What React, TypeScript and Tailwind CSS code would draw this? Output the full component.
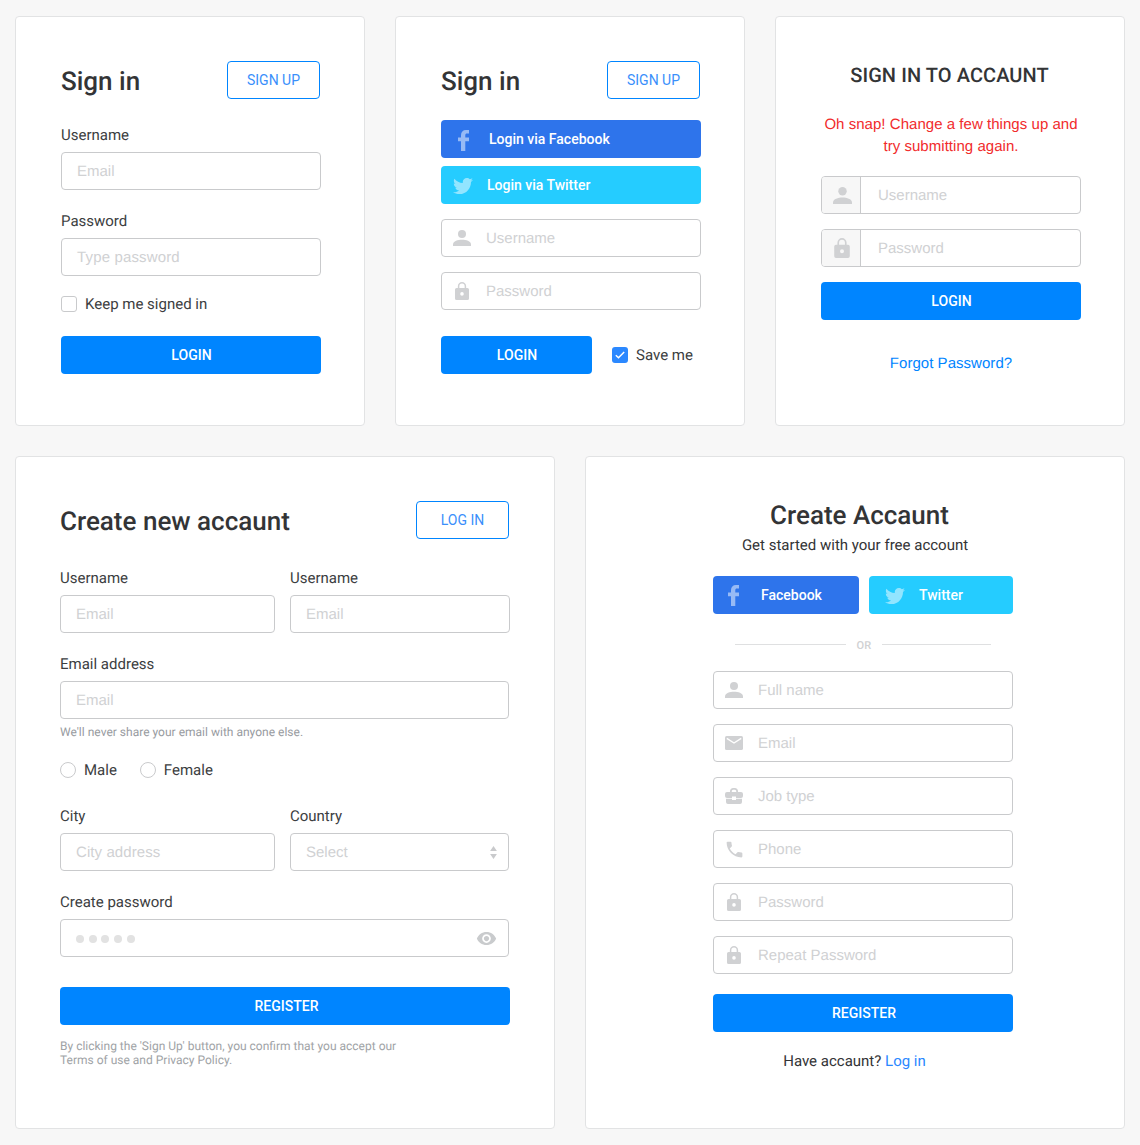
import React from "react";
import { MdPhone, MdVisibility } from "react-icons/md";
import { FaTwitter } from "react-icons/fa";

type Kids = { children?: React.ReactNode; className?: string };

const PersonIcon = ({ w = 18, h = 16 }) => (
  <svg width={w} height={h} viewBox="0 0 18 16" fill="currentColor">
    <circle cx="9" cy="4" r="4" />
    <path d="M0 16v-1.600C0 11.200 5 9.800 9 9.800s9 1.400 9 4.600V16z" />
  </svg>
);

const LockIcon = ({ w = 14, h = 18 }) => (
  <svg width={w} height={h} viewBox="0 0 14 18" fill="none">
    <path d="M3.600 7V4.200a3.400 3.400 0 0 1 6.800 0V7" stroke="currentColor" strokeWidth="1.500" />
    <path
      fill="currentColor"
      fillRule="evenodd"
      d="M1.600 6h10.800A1.600 1.600 0 0 1 14 7.600v8.800A1.600 1.600 0 0 1 12.400 18H1.600A1.600 1.600 0 0 1 0 16.400V7.600A1.600 1.600 0 0 1 1.600 6zM7 10.100a1.800 1.800 0 1 0 0 3.600 1.800 1.800 0 0 0 0-3.600z"
    />
  </svg>
);

const MailIcon = () => (
  <svg width="18" height="14" viewBox="0 0 18 14" fill="none">
    <rect width="18" height="14" rx="1.6" fill="currentColor" />
    <path d="M1.800 2.400 9 7l7.200-4.600" stroke="#fff" strokeWidth="1.400" />
  </svg>
);

const CaseIcon = () => (
  <svg width="18" height="16" viewBox="0 0 18 16" fill="none">
    <path d="M5.900 4.500V3.200a2.200 2.200 0 0 1 2.200-2.300h1.800a2.200 2.200 0 0 1 2.200 2.300v1.300" stroke="currentColor" strokeWidth="1.800" />
    <path
      fill="currentColor"
      d="M2 4h14a2 2 0 0 1 2 2v2a2 2 0 0 1-2 2h-5V8.600H7V10H2a2 2 0 0 1-2-2V6a2 2 0 0 1 2-2zM1 10.700h6v1.300h4v-1.300h6V14a2 2 0 0 1-2 2H3a2 2 0 0 1-2-2z"
    />
  </svg>
);

const FacebookIcon = ({ className = "" }) => (
  <svg width="11" height="21" viewBox="0 0 11 21" className={className} fill="currentColor">
    <path d="M11 0v3.600H8.900C7.800 3.600 7.300 4.200 7.300 5.200V7.400H11v3.800H7.300V21H3v-9.800H0V7.400h3V5c0-3 1.900-5 5-5z" />
  </svg>
);

const Card = ({ children, className = "" }: Kids) => (
  <section className={`rounded border border-[#e2e3e4] bg-white pt-[44px] ${className}`}>{children}</section>
);

const Title = ({ children, className = "" }: Kids) => (
  <h2 className={`h-[38px] text-[26px] leading-[40px] font-medium text-[#333436] ${className}`}>{children}</h2>
);

const OutlineButton = ({ children }: Kids) => (
  <button className="h-[38px] w-[93px] rounded border border-[#0085ff] text-sm leading-9 text-[#3a8ffb]">
    {children}
  </button>
);

const Solid = ({ children, className = "" }: Kids) => (
  <button
    className={`block h-[38px] rounded bg-[#0085ff] text-sm leading-[38px] font-medium tracking-[0.03px] text-white ${className}`}
  >
    {children}
  </button>
);

const Label = ({ children, className = "" }: Kids) => (
  <div className={`h-5 text-[15px] leading-5 text-[#3c3e41] ${className}`}>{children}</div>
);

const hint = "font-['Liberation_Sans',sans-serif] text-[15px] leading-[38px] text-[#d0d1d3]";

const Input = ({ children, className = "" }: Kids) => (
  <div className={`flex h-[38px] items-center rounded border border-[#c9cacc] px-[15px] ${hint} ${className}`}>
    {typeof children === "string" ? <span className="pt-[2px]">{children}</span> : children}
  </div>
);

const IconInput = ({ icon, children, className = "" }: Kids & { icon: React.ReactNode }) => (
  <div className={`flex h-[38px] items-center rounded border border-[#c9cacc] pl-[9px] ${hint} ${className}`}>
    <span className="mr-[13px] flex w-[22px] justify-center">{icon}</span>
    <span className="pt-[2px]">{children}</span>
  </div>
);

const AddonInput = ({ icon, children, className = "" }: Kids & { icon: React.ReactNode }) => (
  <div className={`flex h-[38px] overflow-hidden rounded border border-[#c9cacc] ${hint} ${className}`}>
    <span className="mr-[17px] flex w-[39px] items-center justify-center border-r border-[#c9cacc] bg-[#f7f7f7] pl-[2px]">
      {icon}
    </span>
    {children}
  </div>
);

const Social = ({ children, className = "" }: Kids) => (
  <button className={`flex h-[38px] items-center rounded text-sm font-medium text-white ${className}`}>
    {children}
  </button>
);

const Radio = ({ children }: Kids) => (
  <label className="flex items-center text-[15px] leading-4 text-[#3c3e41]">
    <span className="mr-2 size-4 rounded-full border border-[#c9cacc]" />
    {children}
  </label>
);

const signupFields = [
  { text: "Full name", icon: <PersonIcon /> },
  { text: "Email", icon: <MailIcon /> },
  { text: "Job type", icon: <CaseIcon /> },
  { text: "Phone", icon: <MdPhone size={21} /> },
  { text: "Password", icon: <LockIcon /> },
  { text: "Repeat Password", icon: <LockIcon /> },
];

export default function App() {
  return (
    <main className="flex h-[1145px] w-[1140px] flex-col gap-[30px] bg-[#f7f7f7] px-[15px] pt-4 font-['Roboto',sans-serif] antialiased [text-rendering:geometricPrecision]">
      <div className="flex h-[410px] gap-[30px]">
        <Card className="w-[350px] pr-[43px] pl-[45px]">
          <div className="flex h-[38px] justify-between pr-px">
            <Title className="pt-px">Sign in</Title>
            <OutlineButton>SIGN UP</OutlineButton>
          </div>
          <Label className="mt-[26px]">Username</Label>
          <Input className="mt-[7px]">Email</Input>
          <Label className="mt-[21px]">Password</Label>
          <Input className="mt-[7px] tracking-[0.15px]">Type password</Input>
          <label className="mt-5 flex h-4 items-center text-[15px] leading-4 text-[#3c3e41]">
            <span className="mr-2 size-4 rounded-[3px] border border-[#c9cacc]" />
            Keep me signed in
          </label>
          <Solid className="mt-6 w-full pl-px">LOGIN</Solid>
        </Card>

        <Card className="w-[350px] pr-[43px] pl-[45px]">
          <div className="flex h-[38px] justify-between pr-px">
            <Title className="pt-px">Sign in</Title>
            <OutlineButton>SIGN UP</OutlineButton>
          </div>
          <Social className="mt-[21px] w-full bg-[#2e74eb] pl-[17px]">
            <FacebookIcon className="mt-[3px] mr-5 opacity-50" />
            Login via Facebook
          </Social>
          <Social className="mt-2 w-full bg-[#25ccff] pl-[12px]">
            <FaTwitter size={20} className="mt-[2px] mr-[14px] opacity-50" />
            Login via Twitter
          </Social>
          <IconInput className="mt-[15px]" icon={<PersonIcon />}>Username</IconInput>
          <IconInput className="mt-[15px]" icon={<LockIcon />}>Password</IconInput>
          <div className="mt-[26px] flex items-center">
            <Solid className="w-[151px] pl-px">LOGIN</Solid>
            <label className="ml-5 flex items-center text-[15px] leading-4 text-[#3c3e41]">
              <span className="mr-2 flex size-4 items-center justify-center rounded-[3px] bg-[#2b88ff]">
                <svg width="10" height="8" viewBox="0 0 10 8" fill="none" stroke="#fff" strokeWidth="1.5">
                  <path d="M0.800 4.200 3.500 6.700 9.200 1" />
                </svg>
              </span>
              Save me
            </label>
          </div>
        </Card>

        <Card className="w-[350px] pr-[43px] pl-[45px]">
          <h2 className="-mt-px pr-[3px] text-center text-xl leading-[30px] font-medium tracking-[0.08px] text-[#333436]">
            SIGN IN TO ACCAUNT
          </h2>
          <p className="mt-6 text-center font-['Liberation_Sans',sans-serif] text-[15px] leading-[22px] tracking-[0.04px] whitespace-nowrap text-[#f12b2c]">
            Oh snap! Change a few things up and
            <br />
            try submitting again.
          </p>
          <AddonInput className="mt-[18px]" icon={<PersonIcon w={19} h={17} />}>Username</AddonInput>
          <AddonInput className="mt-[15px]" icon={<LockIcon w={16} h={20} />}>Password</AddonInput>
          <Solid className="mt-[15px] w-full pl-px">LOGIN</Solid>
          <p className="mt-[34px] text-center font-['Liberation_Sans',sans-serif] text-[15px] leading-5 tracking-[0.04px] text-[#0085ff]">
            Forgot Password?
          </p>
        </Card>
      </div>

      <div className="flex h-[673px] gap-[30px]">
        <Card className="w-[540px] pr-[44px] pl-[44px]">
          <div className="flex h-[38px] justify-between pr-px">
            <Title className="pt-px">Create new accaunt</Title>
            <OutlineButton>LOG IN</OutlineButton>
          </div>
          <div className="mt-[29px] flex gap-[15px]">
            <div className="w-[215px]">
              <Label>Username</Label>
              <Input className="mt-[7px]">Email</Input>
            </div>
            <div className="w-[220px]">
              <Label>Username</Label>
              <Input className="mt-[7px]">Email</Input>
            </div>
          </div>
          <Label className="mt-[21px]">Email address</Label>
          <Input className="mt-[7px] w-[449px]">Email</Input>
          <p className="mt-[6px] h-[14px] text-xs leading-[14px] tracking-[0.01px] text-[#989b9f]">
            We'll never share your email with anyone else.
          </p>
          <div className="mt-[23px] flex h-4 gap-[23px]">
            <Radio>Male</Radio>
            <Radio>Female</Radio>
          </div>
          <div className="mt-[28px] flex gap-[15px]">
            <div className="w-[215px]">
              <Label>City</Label>
              <Input className="mt-[7px] tracking-[0.08px]">City address</Input>
            </div>
            <div className="w-[219px]">
              <Label>Country</Label>
              <Input className="mt-[7px] justify-between pr-[11px]">
                <span className="pt-[2px]">Select</span>
                <svg width="7" height="13" viewBox="0 0 7 13" fill="#c9cacc">
                  <path d="M3.500 0 6.900 5H0.100zM3.500 13 6.900 8H0.100z" />
                </svg>
              </Input>
            </div>
          </div>
          <Label className="mt-[21px]">Create password</Label>
          <Input className="mt-[7px] w-[449px] justify-between pr-[11px]">
            <span className="flex gap-[4.7px] pt-[2px]">
              {[0, 1, 2, 3, 4].map((i) => (
                <span key={i} className="size-2 rounded-full bg-[#e2e2e2]" />
              ))}
            </span>
            <MdVisibility size={21} className="text-[#c9cbcd]" />
          </Input>
          <Solid className="mt-[30px] w-[450px] pl-[3px]">REGISTER</Solid>
          <p className="mt-[14px] text-xs leading-[14px] text-[#a0a3a6]">
            By clicking the 'Sign Up' button, you confirm that you accept our
            <br />
            Terms of use and Privacy Policy.
          </p>
        </Card>

        <Card className="w-[540px] pr-[111px] pl-[127px]">
          <Title className="-mt-[5px] pr-[7px] text-center">Create Accaunt</Title>
          <p className="mt-[1px] pr-[16px] text-center text-[15px] leading-5 text-[#333436]">
            Get started with your free account
          </p>
          <div className="mt-[21px] flex gap-[10px]">
            <Social className="w-[146px] bg-[#2e74eb] pl-[15px]">
              <FacebookIcon className="mt-px mr-[22px] opacity-50" />
              Facebook
            </Social>
            <Social className="w-[144px] bg-[#25ccff] pl-4">
              <FaTwitter size={20} className="mt-[2px] mr-[14px] opacity-50" />
              Twitter
            </Social>
          </div>
          <div className="mt-[23px] flex h-4 items-center px-[22px] text-[11px] leading-4 font-medium text-[#d0d1d3]">
            <span className="mb-px h-px w-[111px] bg-[#dfe0e1]" />
            <span className="w-9 pt-px text-center tracking-[0.2px]">OR</span>
            <span className="mb-px h-px w-[109px] bg-[#dfe0e1]" />
          </div>
          <div className="mt-[18px] flex w-[300px] flex-col gap-[15px]">
            {signupFields.map((f) => (
              <IconInput key={f.text} icon={f.icon}>
                {f.text}
              </IconInput>
            ))}
          </div>
          <Solid className="mt-5 w-[300px] pl-[2px]">REGISTER</Solid>
          <p className="mt-[19px] pr-[17px] text-center text-[15px] leading-5 text-[#333436]">
            Have accaunt? <a className="text-[#2b88ff]">Log in</a>
          </p>
        </Card>
      </div>
    </main>
  );
}
